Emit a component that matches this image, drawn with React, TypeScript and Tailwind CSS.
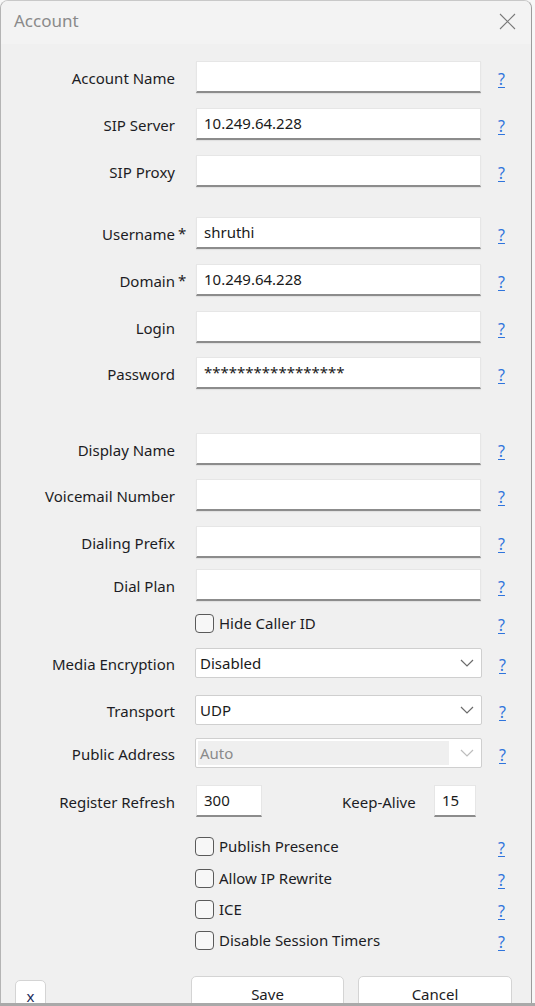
import type { ReactNode } from 'react'

const font = { fontFamily: '"Noto Sans", "Open Sans", Arial, sans-serif' }

function Help() {
  return (
    <span className="ml-[17px] mt-[4px] text-[16px] leading-none text-[#2f74dc] underline underline-offset-2">?</span>
  )
}

function Label({ text, req }: { text: string; req?: boolean }) {
  return (
    <div className="relative mt-[2px] w-[174px] shrink-0 text-right text-[15px] text-[#1c1c24]">
      {text}
      {req && <span className="absolute left-full top-[-1px] ml-[3px]">*</span>}
    </div>
  )
}

function TextRow({ label, value, req, mt }: { label: string; value?: string; req?: boolean; mt: string }) {
  return (
    <div className={`flex h-[32px] items-center ${mt}`}>
      <Label text={label} req={req} />
      <div className="ml-[21px] flex h-[32px] w-[285px] items-start border border-[#e6e6e6] border-b-[2px] border-b-[#8c8c8c] bg-white px-[7px] pt-[3px] text-[15px] text-[#1a1a1a] shadow-[0_1px_1px_rgba(0,0,0,0.06)]">
        {value}
      </div>
      <Help />
    </div>
  )
}

function SelectRow({ label, value, disabled, mt }: { label: string; value: string; disabled?: boolean; mt: string }) {
  return (
    <div className={`flex h-[30px] items-center ${mt}`}>
      <Label text={label} />
      <div className="ml-[20px] flex h-[30px] w-[287px] items-center rounded-[2px] border border-[#cfcfcf] bg-white p-[2px]">
        <div
          className={`flex h-full flex-1 items-center pl-[2px] text-[15px] ${
            disabled ? 'bg-[#efefef] text-[#8a8a8a]' : 'text-[#1a1a1a]'
          }`}
        >
          {value}
        </div>
        <svg width="14" height="8" viewBox="0 0 14 8" className="ml-[11px] mr-[5px]">
          <path d="M1 1l6 6 6-6" fill="none" stroke={disabled ? '#bdbdbd' : '#6b6b6b'} strokeWidth="1.2" />
        </svg>
      </div>
      <Help />
    </div>
  )
}

function Check({ label, mt }: { label: string; mt: string }) {
  return (
    <div className={`flex h-[20px] items-center ${mt}`}>
      <div className="ml-[194px] h-[19px] w-[19px] shrink-0 rounded-[4px] border-[1.5px] border-[#5a5a5a] bg-[#f7f7f7]" />
      <span className="ml-[5px] w-[262px] text-[15px] text-[#1c1c24]">{label}</span>
      <span className="ml-[17px] mt-[3px] text-[16px] leading-none text-[#2f74dc] underline underline-offset-2">?</span>
    </div>
  )
}

function Btn({ children, w, ml }: { children: ReactNode; w: string; ml: string }) {
  return (
    <div
      className={`${w} ${ml} flex h-[40px] justify-center rounded-[5px] border border-[#d4d4d4] bg-white pt-[6px] text-[15px] text-[#1c1c24]`}
    >
      {children}
    </div>
  )
}

export default function App() {
  return (
    <div className="h-[1006px] w-[535px] overflow-hidden bg-[#f7f7f7]" style={font}>
      <div className="flex h-[1003px] w-[532px] flex-col overflow-hidden rounded-t-[8px] border-x border-t border-l-[#b4b4b4] border-r-[#9c9c9c] border-t-[#c8c8c8] bg-[#f0f0f0]">
        <div className="flex h-[43px] shrink-0 items-center justify-between bg-[#f3f3f3] pb-[3px] pl-[13px] pr-[15px]">
          <span className="text-[17px] text-[#8a8a8a]">Account</span>
          <svg width="17" height="17" viewBox="0 0 17 17">
            <path d="M1 1l15 15M16 1L1 16" stroke="#7a7a7a" strokeWidth="1.1" />
          </svg>
        </div>

        <div className="flex flex-col">
          <TextRow label="Account Name" mt="mt-[17px]" />
          <TextRow label="SIP Server" value="10.249.64.228" mt="mt-[15px]" />
          <TextRow label="SIP Proxy" mt="mt-[15px]" />
          <TextRow label="Username" value="shruthi" req mt="mt-[30px]" />
          <TextRow label="Domain" value="10.249.64.228" req mt="mt-[15px]" />
          <TextRow label="Login" mt="mt-[15px]" />
          <TextRow label="Password" value="*****************" mt="mt-[14px]" />
          <TextRow label="Display Name" mt="mt-[44px]" />
          <TextRow label="Voicemail Number" mt="mt-[14px]" />
          <TextRow label="Dialing Prefix" mt="mt-[15px]" />
          <TextRow label="Dial Plan" mt="mt-[11px]" />
          <Check label="Hide Caller ID" mt="mt-[12px]" />
          <SelectRow label="Media Encryption" value="Disabled" mt="mt-[15px]" />
          <SelectRow label="Transport" value="UDP" mt="mt-[17px]" />
          <SelectRow label="Public Address" value="Auto" disabled mt="mt-[13px]" />

          <div className="mt-[17px] flex h-[32px] items-center">
            <Label text="Register Refresh" />
            <div className="ml-[21px] h-[32px] w-[66px] shrink-0 border border-[#e6e6e6] border-b-[2px] border-b-[#8c8c8c] bg-white px-[7px] pt-[3px] text-[15px] text-[#1a1a1a]">
              300
            </div>
            <span className="ml-[80px] mt-[2px] w-[78px] shrink-0 text-[15px] text-[#1c1c24]">Keep-Alive</span>
            <div className="ml-[14px] h-[32px] w-[42px] shrink-0 border border-[#e6e6e6] border-b-[2px] border-b-[#8c8c8c] bg-white px-[7px] pt-[3px] text-[15px] text-[#1a1a1a]">
              15
            </div>
          </div>

          <Check label="Publish Presence" mt="mt-[19px]" />
          <Check label="Allow IP Rewrite" mt="mt-[12px]" />
          <Check label="ICE" mt="mt-[11px]" />
          <Check label="Disable Session Timers" mt="mt-[11px]" />

          <div className="mt-[26px] flex items-start">
            <div className="ml-[14px] mt-[4px] flex h-[36px] w-[31px] justify-center rounded-[5px] border border-[#d4d4d4] bg-white pt-[4px] text-[15px] text-[#1c2a5a]">
              x
            </div>
            <Btn w="w-[153px]" ml="ml-[145px]">Save</Btn>
            <Btn w="w-[154px]" ml="ml-[14px]">Cancel</Btn>
          </div>
        </div>
      </div>
      <div className="h-[3px] w-[535px] bg-[#a9a9a9]" />
    </div>
  )
}
